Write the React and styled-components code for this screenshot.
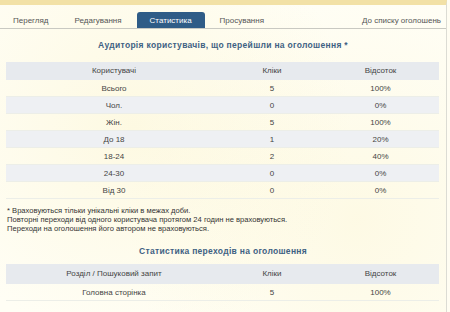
import React from "react";
import styled, { createGlobalStyle } from "styled-components";

const GlobalStyle = createGlobalStyle`
  html, body { margin: 0; padding: 0; }
  body {
    background: #fffdf2;
    font-family: "Liberation Sans", Arial, sans-serif;
    color: #444;
  }
`;

const Page = styled.div`
  width: 447px;
  height: 312px;
  box-sizing: border-box;
  border-top: 5px solid #f2e1a6;
  border-right: 1px solid #dcdcd4;
  background:
    radial-gradient(circle at 30% 40%, rgba(250, 240, 190, 0.35), transparent 60%),
    radial-gradient(circle at 80% 70%, rgba(250, 240, 190, 0.3), transparent 55%),
    #fffef5;
  overflow: hidden;
`;

const TabBar = styled.div`
  display: flex;
  align-items: stretch;
  gap: 4px;
  height: 16px;
  margin-top: 7px;
  padding-left: 2px;
  border-bottom: 1px solid #c9c9c2;
  font-size: 8px;
`;

const Tab = styled.div`
  display: flex;
  align-items: center;
  padding: 0 ${(p) => (p.$active ? 13 : 11)}px;
  color: ${(p) => (p.$active ? "#ffffff" : "#555")};
  background: ${(p) => (p.$active ? "#2f5c87" : "transparent")};
  border-radius: ${(p) => (p.$active ? "3px 3px 0 0" : "0")};
`;

const RightLink = styled.div`
  margin-left: auto;
  padding-right: 5px;
  display: flex;
  align-items: center;
  color: #555;
`;

const Heading = styled.div`
  text-align: center;
  font-weight: bold;
  font-size: 8.5px;
  letter-spacing: 0.3px;
  color: #3e6183;
  margin-top: ${(p) => p.$mt}px;
  height: 14px;
  line-height: 14px;
`;

const Table = styled.div`
  margin: ${(p) => p.$mt}px 7px 0 6px;
  font-size: 8px;
  color: #444;
`;

const Row = styled.div`
  display: grid;
  grid-template-columns: 216px 100px 1fr;
  height: ${(p) => (p.$head ? p.$hh || 18 : 17)}px;
  align-items: center;
  text-align: center;
  background: ${(p) => (p.$head ? "#e7eaee" : p.$shade ? "#eef0f3" : "transparent")};
  border-bottom: 1px solid ${(p) => (p.$head ? "#e7eaee" : "#eceee8")};
  box-sizing: border-box;
`;

const Notes = styled.div`
  margin: 7px 0 0 7px;
  font-size: 7.6px;
  line-height: 9px;
  color: #333;
`;

const audience = [
  ["Всього", "5", "100%"],
  ["Чол.", "0", "0%"],
  ["Жін.", "5", "100%"],
  ["До 18", "1", "20%"],
  ["18-24", "2", "40%"],
  ["24-30", "0", "0%"],
  ["Від 30", "0", "0%"],
];

export default function App() {
  return (
    <>
      <GlobalStyle />
      <Page>
        <TabBar>
          <Tab>Перегляд</Tab>
          <Tab>Редагування</Tab>
          <Tab $active>Статистика</Tab>
          <Tab>Просування</Tab>
          <RightLink>До списку оголошень</RightLink>
        </TabBar>
        <Heading $mt={9}>
          Аудиторія користувачів, що перейшли на оголошення *
        </Heading>
        <Table $mt={10}>
          <Row $head>
            <span>Користувачі</span>
            <span>Кліки</span>
            <span>Відсоток</span>
          </Row>
          {audience.map((r, i) => (
            <Row key={r[0]} $shade={i % 2 === 1}>
              <span>{r[0]}</span>
              <span>{r[1]}</span>
              <span>{r[2]}</span>
            </Row>
          ))}
        </Table>
        <Notes>
          * Враховуються тільки унікальні кліки в межах доби.
          <br />
          Повторні переходи від одного користувача протягом 24 годин не враховуються.
          <br />
          Переходи на оголошення його автором не враховуються.
        </Notes>
        <Heading $mt={11}>Статистика переходів на оголошення</Heading>
        <Table $mt={6}>
          <Row $head $hh={20}>
            <span>Розділ / Пошуковий запит</span>
            <span>Кліки</span>
            <span>Відсоток</span>
          </Row>
          <Row>
            <span>Головна сторінка</span>
            <span>5</span>
            <span>100%</span>
          </Row>
        </Table>
      </Page>
    </>
  );
}
